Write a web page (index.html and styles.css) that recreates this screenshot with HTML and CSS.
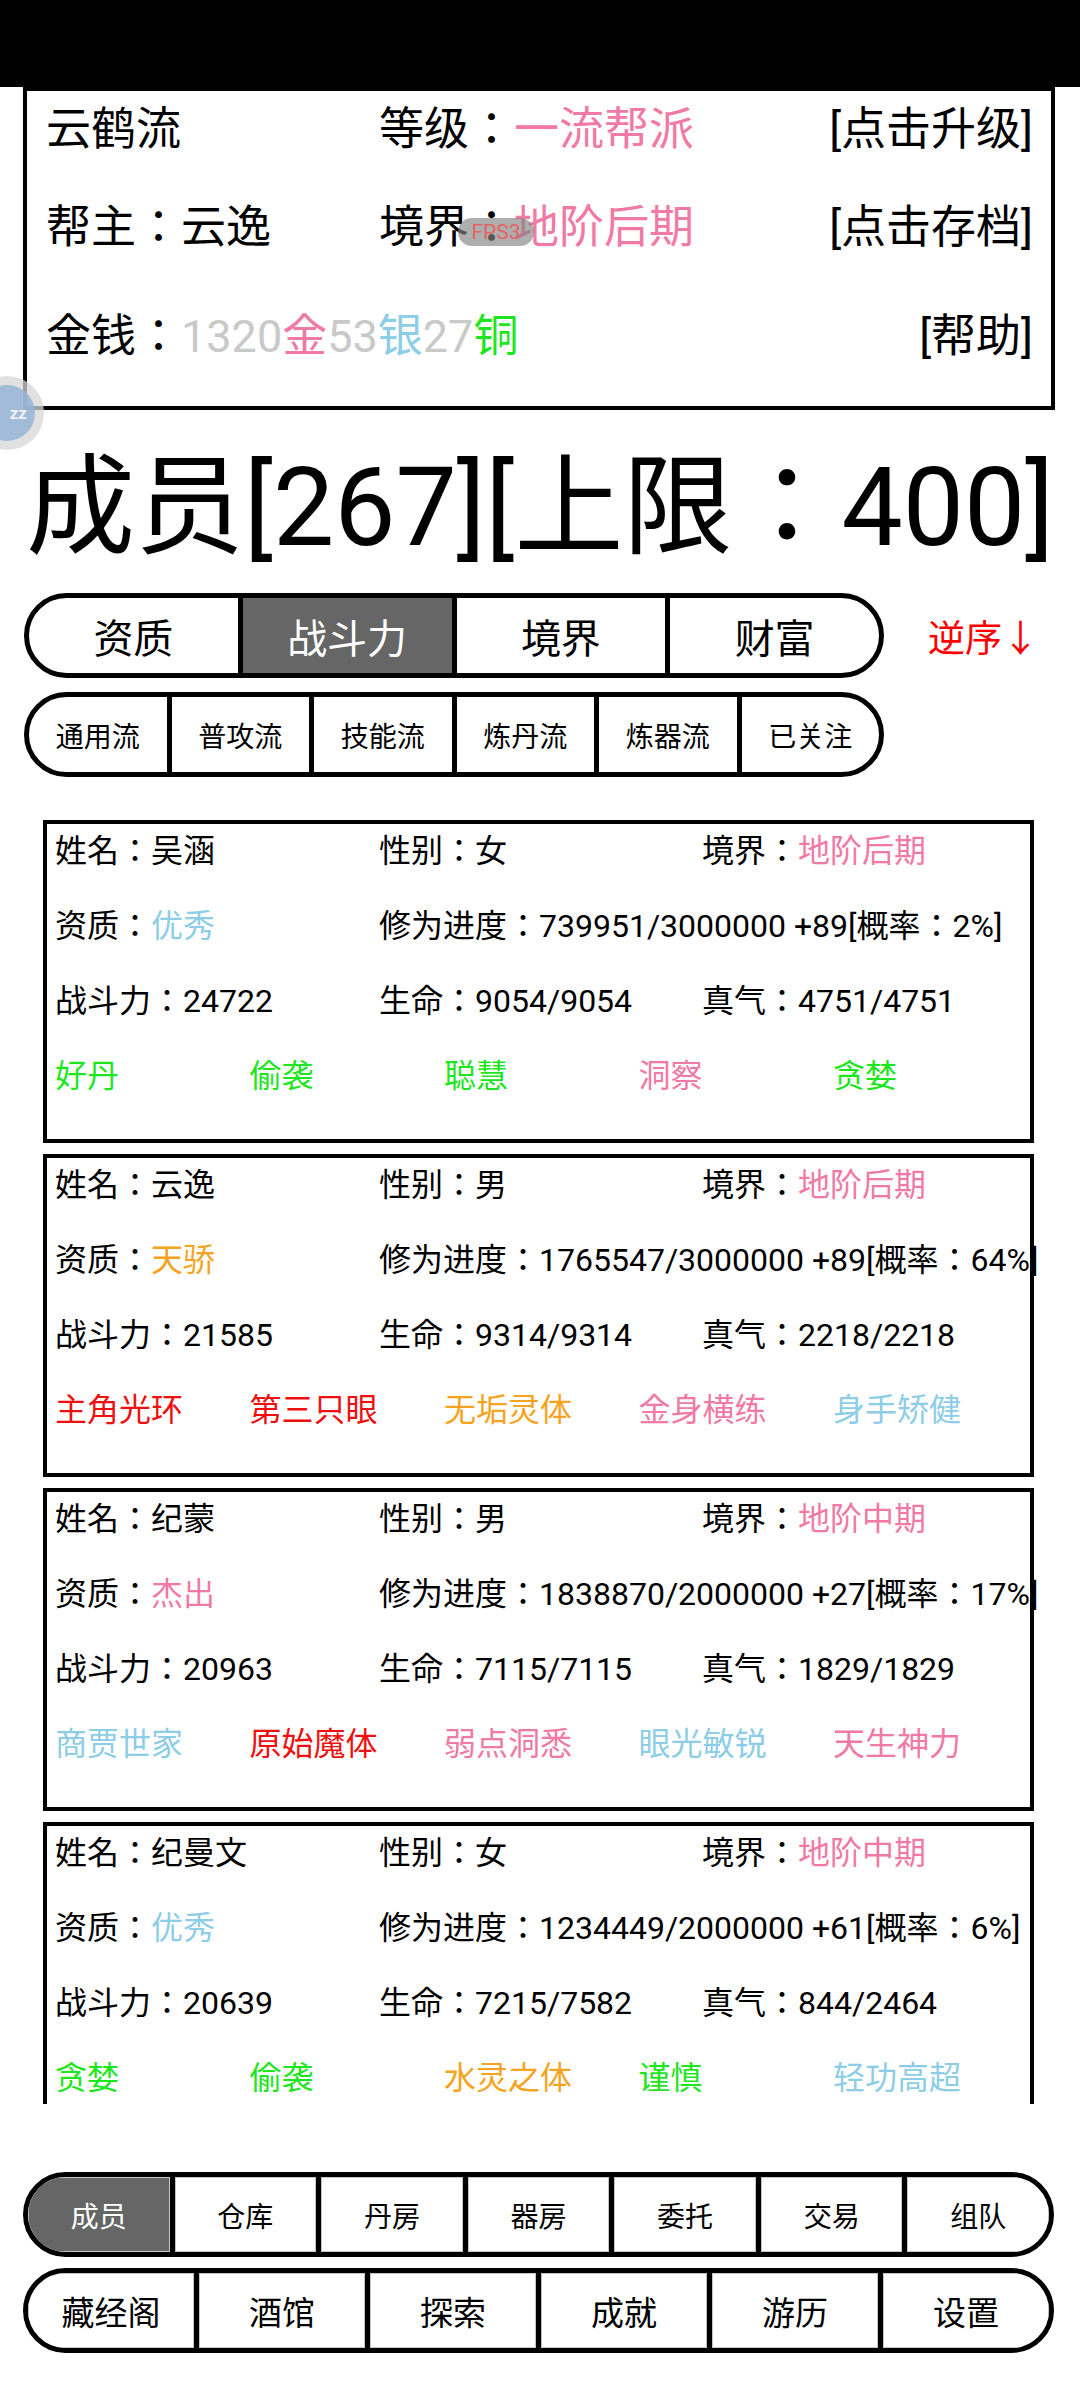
FILE: index.html
```html
<!DOCTYPE html>
<html lang="zh">
<head>
    <meta charset="UTF-8">
    <meta name="viewport" content="width=device-width, initial-scale=1.0">
    <title>成员</title>
    <link rel="stylesheet" href="styles.css">
</head>
<body>
    <div class="status-bar"></div>

    <div class="guild-panel">
        <div class="cell">云鹤流</div>
        <div class="cell">等级：<span class="pink">一流帮派</span></div>
        <div class="cell right">[点击升级]</div>

        <div class="cell">帮主：云逸</div>
        <div class="cell">境界：<span class="pink">地阶后期</span></div>
        <div class="cell right">[点击存档]</div>

        <div class="cell money">金钱：<span class="grey">1320</span><span class="pink">金</span><span class="grey">53</span><span class="blue">银</span><span class="grey">27</span><span class="green">铜</span></div>
        <div class="cell"></div>
        <div class="cell right">[帮助]</div>
    </div>

    <div class="float-ball"><span>zz</span></div>
    <div class="fps">FPS3</div>

    <div class="member-title">成员[267][上限：400]</div>

    <div class="sort-line">
        <div class="seg-bar sort-tabs">
            <div class="seg">资质</div>
            <div class="seg active">战斗力</div>
            <div class="seg">境界</div>
            <div class="seg">财富</div>
        </div>
        <div class="order">逆序↓</div>
    </div>

    <div class="seg-bar filter-tabs">
        <div class="seg">通用流</div>
        <div class="seg">普攻流</div>
        <div class="seg">技能流</div>
        <div class="seg">炼丹流</div>
        <div class="seg">炼器流</div>
        <div class="seg">已关注</div>
    </div>

    <div class="member-list">
        <div class="card">
            <div class="row info">
                <div>姓名：吴涵</div>
                <div>性别：女</div>
                <div>境界：<span class="pink">地阶后期</span></div>
            </div>
            <div class="row info">
                <div>资质：<span class="blue">优秀</span></div>
                <div class="wide">修为进度：739951/3000000 +89[概率：2%]</div>
            </div>
            <div class="row info">
                <div>战斗力：24722</div>
                <div>生命：9054/9054</div>
                <div>真气：4751/4751</div>
            </div>
            <div class="row traits">
                <div class="green">好丹</div>
                <div class="green">偷袭</div>
                <div class="green">聪慧</div>
                <div class="pink">洞察</div>
                <div class="green">贪婪</div>
            </div>
        </div>

        <div class="card">
            <div class="row info">
                <div>姓名：云逸</div>
                <div>性别：男</div>
                <div>境界：<span class="pink">地阶后期</span></div>
            </div>
            <div class="row info">
                <div>资质：<span class="orange">天骄</span></div>
                <div class="wide">修为进度：1765547/3000000 +89[概率：64%]</div>
            </div>
            <div class="row info">
                <div>战斗力：21585</div>
                <div>生命：9314/9314</div>
                <div>真气：2218/2218</div>
            </div>
            <div class="row traits">
                <div class="red">主角光环</div>
                <div class="red">第三只眼</div>
                <div class="orange">无垢灵体</div>
                <div class="pink">金身横练</div>
                <div class="blue">身手矫健</div>
            </div>
        </div>

        <div class="card">
            <div class="row info">
                <div>姓名：纪蒙</div>
                <div>性别：男</div>
                <div>境界：<span class="pink">地阶中期</span></div>
            </div>
            <div class="row info">
                <div>资质：<span class="pink">杰出</span></div>
                <div class="wide">修为进度：1838870/2000000 +27[概率：17%]</div>
            </div>
            <div class="row info">
                <div>战斗力：20963</div>
                <div>生命：7115/7115</div>
                <div>真气：1829/1829</div>
            </div>
            <div class="row traits">
                <div class="blue">商贾世家</div>
                <div class="red">原始魔体</div>
                <div class="pink">弱点洞悉</div>
                <div class="blue">眼光敏锐</div>
                <div class="pink">天生神力</div>
            </div>
        </div>

        <div class="card">
            <div class="row info">
                <div>姓名：纪曼文</div>
                <div>性别：女</div>
                <div>境界：<span class="pink">地阶中期</span></div>
            </div>
            <div class="row info">
                <div>资质：<span class="blue">优秀</span></div>
                <div class="wide">修为进度：1234449/2000000 +61[概率：6%]</div>
            </div>
            <div class="row info">
                <div>战斗力：20639</div>
                <div>生命：7215/7582</div>
                <div>真气：844/2464</div>
            </div>
            <div class="row traits">
                <div class="green">贪婪</div>
                <div class="green">偷袭</div>
                <div class="orange">水灵之体</div>
                <div class="green">谨慎</div>
                <div class="blue">轻功高超</div>
            </div>
        </div>
    </div>

    <div class="seg-bar nav-main">
        <div class="seg active">成员</div>
        <div class="seg">仓库</div>
        <div class="seg">丹房</div>
        <div class="seg">器房</div>
        <div class="seg">委托</div>
        <div class="seg">交易</div>
        <div class="seg">组队</div>
    </div>

    <div class="seg-bar nav-sub">
        <div class="seg">藏经阁</div>
        <div class="seg">酒馆</div>
        <div class="seg">探索</div>
        <div class="seg">成就</div>
        <div class="seg">游历</div>
        <div class="seg">设置</div>
    </div>
</body>
</html>
```

FILE: styles.css
```css
body {
    margin: 0;
    width: 1080px;
    height: 2400px;
    overflow: hidden;
    background-color: #fff;
    color: #000;
    font-family: Roboto, "Noto Sans CJK JP", sans-serif;
    /* keep the centred full-width colon of the default glyphs */
    font-feature-settings: "locl" 0;
    position: relative;
}

.status-bar {
    height: 87px;
    background-color: #000;
}

/* header panel */
.guild-panel {
    margin: 0 25px 0 23px;
    height: 323px;
    box-sizing: border-box;
    border: 4px solid #000;
    padding: 9px 18px 0 19px;
    display: grid;
    grid-template-columns: 333px 1fr auto;
    grid-template-rows: 60px 60px 60px;
    row-gap: 38px;
    font-size: 45px;
    line-height: 60px;
}
.guild-panel .cell {
    white-space: nowrap;
}
.guild-panel .money,
.guild-panel .cell:nth-child(8),
.guild-panel .cell:nth-child(9) {
    margin-top: 11px;
}
.right {
    text-align: right;
}

.pink { color: #f07aa5; }
.grey { color: #c9c9c9; }
.blue { color: #8dcde6; }
.green { color: #1ee61e; }
.orange { color: #f5a320; }
.red { color: #ee1010; }

/* overlays */
.float-ball {
    position: absolute;
    left: -30px;
    top: 376px;
    width: 74px;
    height: 74px;
    border-radius: 50%;
    background-color: rgba(215, 215, 215, 0.75);
    display: flex;
    justify-content: center;
    align-items: center;
}
.float-ball span {
    width: 56px;
    height: 56px;
    border-radius: 50%;
    background-color: rgba(150, 180, 215, 0.85);
    color: #eef3f8;
    font-size: 17px;
    font-weight: bold;
    display: flex;
    justify-content: flex-end;
    align-items: center;
    padding-right: 8px;
    box-sizing: border-box;
}
.fps {
    position: absolute;
    left: 458px;
    top: 218px;
    width: 76px;
    height: 28px;
    border-radius: 14px;
    background-color: rgba(130, 130, 130, 0.65);
    color: #e46464;
    font-size: 21px;
    line-height: 28px;
    text-align: center;
}

.member-title {
    margin: 38px 0 0 26px;
    font-size: 109px;
    line-height: 120px;
    white-space: nowrap;
}

/* segmented bars */
.seg-bar {
    display: flex;
    box-sizing: border-box;
    height: 85px;
    border: 5px solid #000;
    border-radius: 43px;
    overflow: hidden;
    background-color: #fff;
}
.seg-bar .seg {
    flex: 1;
    display: flex;
    justify-content: center;
    align-items: center;
    border-left: 5px solid #000;
    white-space: nowrap;
}
.seg-bar .seg:first-child {
    border-left: none;
}
.seg-bar .seg.active {
    background-color: #666;
    color: #fff;
}

.sort-line {
    margin-top: 25px;
    display: flex;
    align-items: center;
}
.sort-tabs {
    margin-left: 24px;
    width: 860px;
    font-size: 40px;
}
.order {
    margin-left: 44px;
    color: #f00;
    font-size: 37px;
}

.filter-tabs {
    margin: 14px 0 0 24px;
    width: 860px;
    font-size: 28px;
}

/* member list */
.member-list {
    height: 1327px;
    box-sizing: border-box;
    padding-top: 43px;
    overflow: hidden;
}
.card {
    margin: 0 46px 11px 43px;
    height: 323px;
    box-sizing: border-box;
    border: 4px solid #000;
    padding: 6px 0 0 8px;
    font-size: 32px;
}
.row {
    height: 75px;
    line-height: 42px;
    display: grid;
    white-space: nowrap;
}
.info {
    grid-template-columns: 324px 323px auto;
}
.info .wide {
    grid-column: 2 / 4;
}
.traits {
    grid-template-columns: repeat(5, 194.5px);
}

/* bottom navigation */
.nav-main {
    margin: 68px 26px 0 23px;
    font-size: 28px;
}
.nav-sub {
    margin: 11px 26px 0 23px;
    font-size: 33px;
}
.nav-main .seg,
.nav-sub .seg {
    box-shadow: inset 0 0 0 1px #c4c4c4;
}
```
